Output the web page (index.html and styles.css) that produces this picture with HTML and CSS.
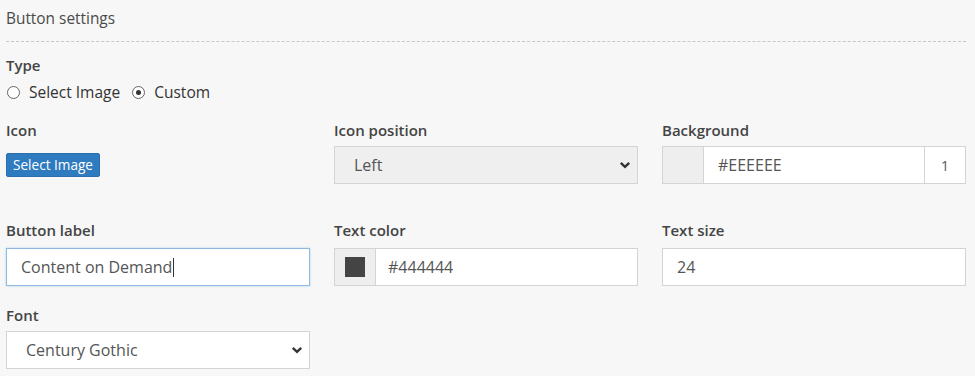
FILE: index.html
```html
<!DOCTYPE html>
<html>
<head>
<meta charset="utf-8">
<link rel="stylesheet" href="styles.css">
</head>
<body>
<div class="page">
  <div class="heading">Button settings</div>
  <div class="divider"></div>
  <div class="type-group">
    <div class="label">Type</div>
    <div class="radios">
      <span class="radio"><span class="circle"></span>Select Image</span>
      <span class="radio"><span class="circle checked"></span>Custom</span>
    </div>
  </div>
  <div class="row row1">
    <div class="field">
      <div class="label">Icon</div>
      <div class="btn-wrap"><span class="btn">Select Image</span></div>
    </div>
    <div class="field">
      <div class="label">Icon position</div>
      <div class="control select grey">
        <span>Left</span>
        <svg class="chev" width="12" height="8" viewBox="0 0 12 8"><path d="M1.8 1.8 L6 5.8 L10.2 1.8" fill="none" stroke="#333" stroke-width="2.4"/></svg>
      </div>
    </div>
    <div class="field">
      <div class="label">Background</div>
      <div class="control group">
        <span class="swatch"></span>
        <span class="gtext">#EEEEEE</span>
        <span class="addon">1</span>
      </div>
    </div>
  </div>
  <div class="row row2">
    <div class="field">
      <div class="label">Button label</div>
      <div class="control input focus"><span>Content on Demand</span><span class="caret"></span></div>
    </div>
    <div class="field">
      <div class="label">Text color</div>
      <div class="control group">
        <span class="swatch"><span class="chip"></span></span>
        <span class="gtext tight">#444444</span>
      </div>
    </div>
    <div class="field">
      <div class="label">Text size</div>
      <div class="control input"><span>24</span></div>
    </div>
  </div>
  <div class="row row3">
    <div class="field">
      <div class="label">Font</div>
      <div class="control select">
        <span>Century Gothic</span>
        <svg class="chev" width="12" height="8" viewBox="0 0 12 8"><path d="M1.8 1.8 L6 5.8 L10.2 1.8" fill="none" stroke="#333" stroke-width="2.4"/></svg>
      </div>
    </div>
  </div>
</div>
</body>
</html>
```
FILE: styles.css
```css
html, body {
  margin: 0;
  padding: 0;
  background: #f7f7f7;
}
body {
  font-family: "Open Sans", "Noto Sans", sans-serif;
  font-size: 14px;
  color: #333;
  width: 975px;
  height: 376px;
  overflow: hidden;
}
.page {
  padding: 9px 9px 0 6px;
}
.heading {
  font-size: 15.4px;
  line-height: 20px;
  color: #4a4a4a;
}
.divider {
  border-top: 1px dashed #c8c8c8;
  margin-top: 12px;
  margin-bottom: 13px;
}
.label {
  font-weight: 600;
  font-size: 15px;
  line-height: 20px;
  color: #444;
}
.radios {
  display: flex;
  gap: 11px;
  margin-top: 7px;
  font-size: 15.5px;
  line-height: 20px;
}
.radio {
  display: flex;
  align-items: center;
  color: #333;
}
.circle {
  width: 11px;
  height: 11px;
  border: 1px solid #666;
  border-radius: 50%;
  margin: 0 9px 0 1px;
  display: flex;
  align-items: center;
  justify-content: center;
  background: #fff;
}
.circle.checked::after {
  content: "";
  width: 5px;
  height: 5px;
  border-radius: 50%;
  background: #333;
}
.row {
  display: grid;
  grid-template-columns: repeat(3, 304px);
  column-gap: 24px;
}
.row1 { margin-top: 18px; }
.row2 { margin-top: 36px; }
.row3 { margin-top: 19px; }
.field .label {
  margin-bottom: 6px;
}
.row2 .field .label {
  margin-bottom: 8px;
}
.btn-wrap {
  padding-top: 7px;
}
.btn {
  display: inline-block;
  background: #2f7bbf;
  color: #fff;
  font-size: 13.6px;
  line-height: 22px;
  padding: 0 6px;
  border: 1px solid #2a6fae;
  border-radius: 2px;
}
.control {
  box-sizing: border-box;
  height: 38px;
  border: 1px solid #d4d4d4;
  background: #fff;
  display: flex;
  align-items: center;
  font-size: 16px;
  color: #555;
}
.select {
  justify-content: space-between;
  padding: 0 6px 0 19px;
}
.select.grey {
  background: #efefef;
}
.chev {
  display: block;
}
.input {
  padding: 0 14px;
}
.input.focus {
  border-color: #8fb9df;
  box-shadow: 0 0 2px rgba(102, 175, 233, 0.5);
}
.caret {
  width: 1px;
  height: 19px;
  background: #333;
  margin-left: 1px;
}
.group {
  align-items: stretch;
}
.swatch {
  width: 40px;
  background: #eeeeee;
  border-right: 1px solid #d4d4d4;
  display: flex;
  align-items: center;
  justify-content: center;
}
.chip {
  width: 20px;
  height: 20px;
  background: #444444;
}
.gtext {
  flex: 1;
  display: flex;
  align-items: center;
  padding-left: 14px;
}
.gtext.tight {
  padding-left: 12px;
}
.addon {
  width: 40px;
  border-left: 1px solid #d4d4d4;
  display: flex;
  align-items: center;
  justify-content: center;
  font-size: 14px;
}
```
